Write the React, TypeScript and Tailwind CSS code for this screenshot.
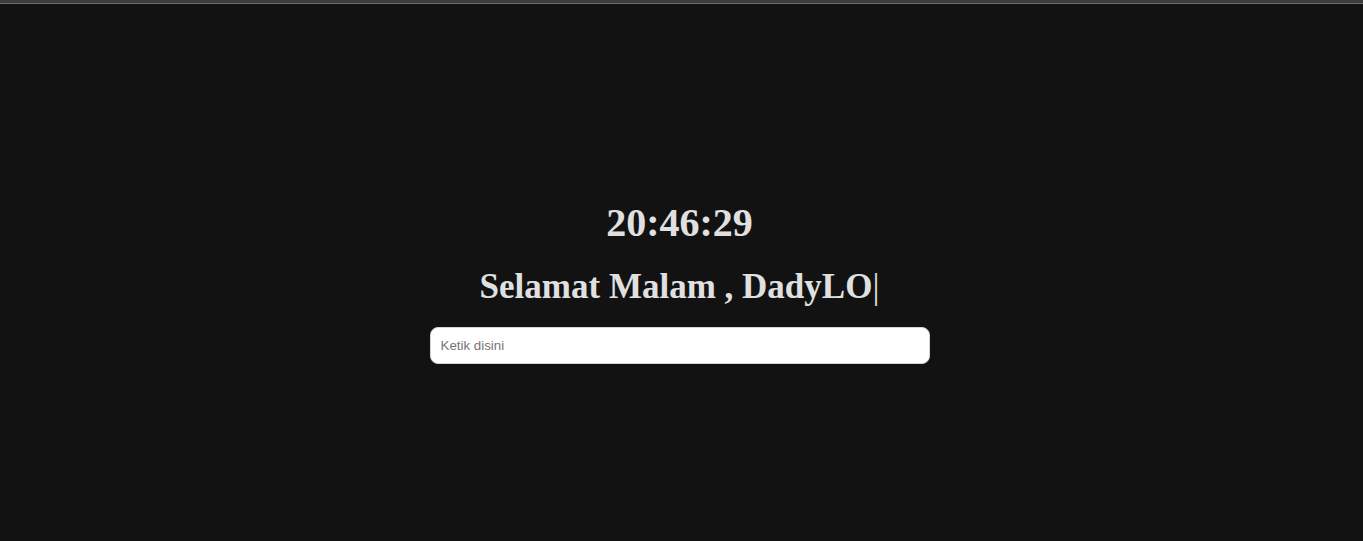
import { useState } from 'react';

export default function App() {
  const [text, setText] = useState('');

  return (
    <div className="min-h-[541px] bg-[#121212] flex flex-col">
      <div className="h-[3px] bg-[#3c3c3c]" />
      <div className="h-px bg-[#6a6a6a]" />
      <div className="flex flex-col items-center pt-[196px] pr-[4px] text-[#e0e0e0] font-['Liberation_Serif',serif]">
        <div className="text-[40px] leading-[46px] font-bold">20:46:29</div>
        <h1 className="mt-[21px] text-[35px] leading-[40px] font-bold">
          Selamat Malam , DadyLO<span className="font-normal">|</span>
        </h1>
        <input
          value={text}
          onChange={(e) => setText(e.target.value)}
          placeholder="Ketik disini"
          className="mt-[20px] w-[500px] h-[37px] px-[10px] rounded-lg bg-white border border-[#d4d4d4] text-[13.33px] text-black placeholder:text-[#757575] font-['Liberation_Sans',sans-serif] outline-none"
        />
      </div>
    </div>
  );
}
